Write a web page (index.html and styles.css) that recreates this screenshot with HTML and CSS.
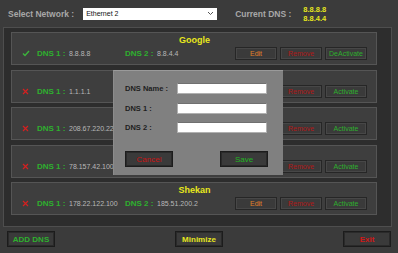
FILE: index.html
```html
<!DOCTYPE html>
<html lang="en">
<head>
    <meta charset="UTF-8">
    <title>DNS Changer</title>
    <link rel="stylesheet" href="styles.css">
</head>
<body>
    <div class="app">
        <div class="top-bar">
            <span class="top-label">Select Network :</span>
            <div class="select">
                <span>Ethernet 2</span>
                <svg class="chevron" width="7" height="5" viewBox="0 0 7 5"><path d="M1 1 L3.5 3.5 L6 1" fill="none" stroke="#555" stroke-width="1"/></svg>
            </div>
            <span class="top-label current">Current DNS :</span>
            <div class="current-values">
                <span>8.8.8.8</span>
                <span>8.8.4.4</span>
            </div>
        </div>

        <div class="list">
            <div class="card">
                <div class="card-title">Google</div>
                <div class="card-row">
                    <span class="state ok"><svg width="8" height="7" viewBox="0 0 8 7"><path d="M1 3.5 L3 5.5 L7 1" fill="none" stroke="#3cb43c" stroke-width="1.4"/></svg></span>
                    <span class="dns-label">DNS 1 :</span>
                    <span class="dns-value">8.8.8.8</span>
                    <span class="dns-label">DNS 2 :</span>
                    <span class="dns-value">8.8.4.4</span>
                    <div class="actions">
                        <button class="btn edit">Edit</button>
                        <button class="btn remove">Remove</button>
                        <button class="btn activate">DeActivate</button>
                    </div>
                </div>
            </div>
            <!-- the next three cards sit under the dialog, only the left part shows -->
            <div class="card">
                <div class="card-title"></div>
                <div class="card-row">
                    <span class="state"><svg width="7" height="7" viewBox="0 0 7 7"><path d="M1 1 L6 6 M6 1 L1 6" stroke="#d42020" stroke-width="1.2"/></svg></span>
                    <span class="dns-label">DNS 1 :</span>
                    <span class="dns-value">1.1.1.1</span>
                    <div class="actions">
                        <button class="btn edit"></button>
                        <button class="btn remove">Remove</button>
                        <button class="btn activate">Activate</button>
                    </div>
                </div>
            </div>
            <div class="card">
                <div class="card-title"></div>
                <div class="card-row">
                    <span class="state"><svg width="7" height="7" viewBox="0 0 7 7"><path d="M1 1 L6 6 M6 1 L1 6" stroke="#d42020" stroke-width="1.2"/></svg></span>
                    <span class="dns-label">DNS 1 :</span>
                    <span class="dns-value">208.67.220.220</span>
                    <div class="actions">
                        <button class="btn edit"></button>
                        <button class="btn remove">Remove</button>
                        <button class="btn activate">Activate</button>
                    </div>
                </div>
            </div>
            <div class="card">
                <div class="card-title"></div>
                <div class="card-row">
                    <span class="state"><svg width="7" height="7" viewBox="0 0 7 7"><path d="M1 1 L6 6 M6 1 L1 6" stroke="#d42020" stroke-width="1.2"/></svg></span>
                    <span class="dns-label">DNS 1 :</span>
                    <span class="dns-value">78.157.42.100</span>
                    <div class="actions">
                        <button class="btn edit"></button>
                        <button class="btn remove">Remove</button>
                        <button class="btn activate">Activate</button>
                    </div>
                </div>
            </div>
            <div class="card">
                <div class="card-title">Shekan</div>
                <div class="card-row">
                    <span class="state"><svg width="7" height="7" viewBox="0 0 7 7"><path d="M1 1 L6 6 M6 1 L1 6" stroke="#d42020" stroke-width="1.2"/></svg></span>
                    <span class="dns-label">DNS 1 :</span>
                    <span class="dns-value">178.22.122.100</span>
                    <span class="dns-label">DNS 2 :</span>
                    <span class="dns-value">185.51.200.2</span>
                    <div class="actions">
                        <button class="btn edit">Edit</button>
                        <button class="btn remove">Remove</button>
                        <button class="btn activate">Activate</button>
                    </div>
                </div>
            </div>
        </div>

        <div class="bottom-bar">
            <button class="big-btn add">ADD DNS</button>
            <button class="big-btn minimize">Minimize</button>
            <button class="big-btn exit">Exit</button>
        </div>

        <div class="dialog">
            <div class="dialog-form">
                <label>DNS Name :</label>
                <input type="text">
                <label>DNS 1 :</label>
                <input type="text">
                <label>DNS 2 :</label>
                <input type="text">
            </div>
            <div class="dialog-buttons">
                <button class="big-btn cancel">Cancel</button>
                <button class="big-btn save">Save</button>
            </div>
        </div>
    </div>
</body>
</html>
```

FILE: styles.css
```css
body {
    margin: 0;
    background-color: #3b3b3b;
    font-family: 'Liberation Sans', Arial, sans-serif;
}
.app {
    position: relative;
    width: 398px;
    height: 253px;
    overflow: hidden;
}
.top-bar {
    display: flex;
    align-items: center;
    height: 27px;
    padding-left: 8px;
}
.top-label {
    color: #a8a8a8;
    font-size: 8.5px;
    font-weight: bold;
}
.select {
    display: flex;
    align-items: center;
    justify-content: space-between;
    box-sizing: border-box;
    width: 134px;
    height: 12px;
    margin-left: 9px;
    padding: 0 3px 0 3px;
    background-color: #fff;
    font-size: 7px;
    color: #111;
}
.current {
    margin-left: 18px;
}
.current-values {
    display: flex;
    flex-direction: column;
    margin-left: 12px;
    color: #e6e61e;
    font-size: 7.5px;
    font-weight: bold;
    line-height: 9px;
}
.list {
    box-sizing: border-box;
    width: 389px;
    height: 200px;
    margin-left: 3px;
    padding: 4px 14px 0 7px;
    background-color: #2d2d2d;
    border: 1px solid #4e4e4e;
    display: flex;
    flex-direction: column;
    gap: 4.5px;
}
.card {
    box-sizing: border-box;
    height: 33px;
    padding: 2px 9px 0 10px;
    background-color: #3e3e3e;
    border: 1px solid #555;
}
.card-title {
    height: 11px;
    text-align: center;
    color: #e8e81c;
    font-size: 9px;
    font-weight: bold;
    line-height: 11px;
}
.card-row {
    display: flex;
    align-items: center;
    height: 13px;
    margin-top: 1px;
}
.state {
    display: flex;
    width: 15px;
}
.dns-label {
    width: 32px;
    color: #2eb02e;
    font-size: 8px;
    font-weight: bold;
}
.dns-value {
    width: 56px;
    color: #b8b8b8;
    font-size: 7px;
}
.actions {
    display: flex;
    gap: 3px;
    margin-left: auto;
}
.btn {
    box-sizing: border-box;
    width: 42px;
    height: 13px;
    padding: 0;
    background-color: #3a3a3a;
    border: 1px solid #262626;
    box-shadow: inset 0 0 0 1px #474747;
    font-family: 'Liberation Sans', Arial, sans-serif;
    font-size: 7px;
}
.btn.edit {
    color: #e0802a;
}
.btn.remove {
    color: #b01818;
}
.btn.activate {
    color: #2eae2e;
}
.bottom-bar {
    display: flex;
    justify-content: space-between;
    padding: 4px 7px 0 7px;
}
.big-btn {
    box-sizing: border-box;
    width: 48px;
    height: 16px;
    padding: 0;
    background-color: #3a3a3a;
    border: 1px solid #1c1c1c;
    box-shadow: inset 0 0 0 1px #2a2a2a;
    font-family: 'Liberation Sans', Arial, sans-serif;
    font-size: 8px;
    font-weight: bold;
}
.big-btn.add {
    color: #2eb02e;
}
.big-btn.minimize {
    color: #e6e61e;
}
.big-btn.exit {
    color: #d01818;
}
.dialog {
    position: absolute;
    left: 113px;
    top: 70px;
    box-sizing: border-box;
    width: 170px;
    height: 105px;
    padding: 12px 15px 0 11px;
    background-color: #808080;
    border-top: 1px solid #9a9a9a;
    border-left: 1px solid #8c8c8c;
}
.dialog-form {
    display: grid;
    grid-template-columns: 52px 90px;
    row-gap: 8.5px;
    align-items: center;
}
.dialog-form label {
    color: #1e1e1e;
    font-size: 7.5px;
    font-weight: bold;
}
.dialog-form input {
    box-sizing: border-box;
    width: 90px;
    height: 11px;
    margin: 0;
    padding: 0;
    background-color: #fff;
    border: 1px solid #b0b0b0;
    border-top-color: #707070;
}
.dialog-buttons {
    display: flex;
    justify-content: space-between;
    margin-top: 18px;
}
.big-btn.cancel {
    color: #c81414;
    font-weight: normal;
}
.big-btn.save {
    color: #22b422;
    font-weight: normal;
}
```
